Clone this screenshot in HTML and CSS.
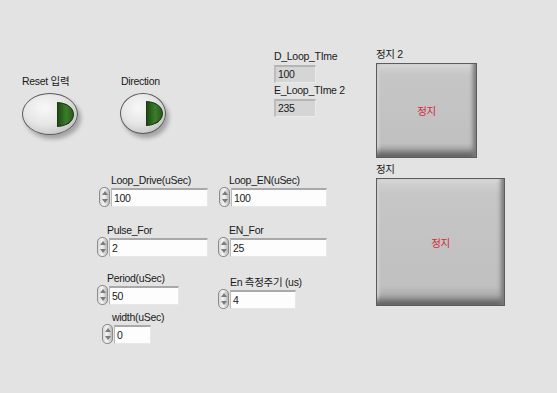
FILE: index.html
```html
<!DOCTYPE html>
<html lang="ko">
<head>
  <meta charset="UTF-8" />
  <title>Front Panel</title>
  <link rel="stylesheet" href="styles.css">
</head>
<body>
  <!-- front panel: every control sits where it was dropped on the panel -->
  <div class="panel">

    <div class="ctl" style="left:22px; top:75px;">
      <div class="lbl">Reset 입력</div>
      <div class="round big"><span class="led"></span></div>
    </div>

    <div class="ctl" style="left:121px; top:75px;">
      <div class="lbl">Direction</div>
      <div class="round small"><span class="led"></span></div>
    </div>

    <div class="ctl" style="left:274px; top:50px;">
      <div class="lbl">D_Loop_TIme</div>
      <div class="ind">100</div>
    </div>
    <div class="ctl" style="left:274px; top:84px;">
      <div class="lbl">E_Loop_TIme 2</div>
      <div class="ind">235</div>
    </div>

    <div class="ctl" style="left:376px; top:48px;">
      <div class="lbl">정지 2</div>
      <div class="stop stop-sm">정지</div>
    </div>
    <div class="ctl" style="left:376px; top:163px;">
      <div class="lbl">정지</div>
      <div class="stop stop-lg">정지</div>
    </div>

    <div class="ctl num" style="left:99px; top:174px;">
      <div class="lbl" style="padding-left:12px;">Loop_Drive(uSec)</div>
      <div class="row"><span class="spin"></span><div class="box" style="width:97px;">100</div></div>
    </div>
    <div class="ctl num" style="left:219px; top:174px;">
      <div class="lbl" style="padding-left:10px;">Loop_EN(uSec)</div>
      <div class="row"><span class="spin"></span><div class="box" style="width:96px;">100</div></div>
    </div>

    <div class="ctl num" style="left:97px; top:224px;">
      <div class="lbl" style="padding-left:10px;">Pulse_For</div>
      <div class="row"><span class="spin"></span><div class="box" style="width:99px;">2</div></div>
    </div>
    <div class="ctl num" style="left:218px; top:224px;">
      <div class="lbl" style="padding-left:11px;">EN_For</div>
      <div class="row"><span class="spin"></span><div class="box" style="width:97px;">25</div></div>
    </div>

    <div class="ctl num" style="left:97px; top:272px;">
      <div class="lbl" style="padding-left:10px;">Period(uSec)</div>
      <div class="row"><span class="spin"></span><div class="box" style="width:70px;">50</div></div>
    </div>
    <div class="ctl num" style="left:218px; top:276px;">
      <div class="lbl" style="padding-left:12px;">En 측정주기 (us)</div>
      <div class="row"><span class="spin"></span><div class="box" style="width:66px;">4</div></div>
    </div>

    <div class="ctl num" style="left:102px; top:311px;">
      <div class="lbl" style="padding-left:10px;">width(uSec)</div>
      <div class="row"><span class="spin"></span><div class="box" style="width:37px;">0</div></div>
    </div>

  </div>
</body>
</html>
```

FILE: styles.css
```css
* { margin: 0; padding: 0; box-sizing: border-box; }
body {
  background: #e3e3e3;
  font-family: 'Liberation Sans', 'Noto Sans CJK KR', sans-serif;
  font-size: 10.5px;
  letter-spacing: -0.3px;
  color: #1a1a1a;
}
.panel {
  position: relative;
  width: 557px;
  height: 393px;
  overflow: hidden;
}
.ctl {
  position: absolute;
  display: flex;
  flex-direction: column;
  align-items: flex-start;
}
.lbl {
  line-height: 13px;
  white-space: nowrap;
}

/* round push buttons with green light */
.round {
  margin-top: 5px;
  border-radius: 50%;
  border: 1px solid #5a5a5a;
  background: radial-gradient(ellipse at 40% 35%, #f8f8f8 0%, #e6e6e6 45%, #c0c0c0 85%, #969696 100%);
  box-shadow: 3px 4px 4px rgba(0,0,0,0.28);
  display: flex;
  align-items: center;
  justify-content: flex-end;
}
.round.big { width: 56px; height: 42px; padding-right: 3px; }
.round.small { width: 46px; height: 41px; padding-right: 2px; margin-left: -1px; }
.led {
  width: 17px;
  height: 25px;
  border: 1px solid #1d3a12;
  border-radius: 0 100% 100% 0 / 0 50% 50% 0;
  background: linear-gradient(90deg, #1e4c14, #3c7d2a 55%, #2a5c1c);
}

/* indicators */
.ind {
  margin-top: 2px;
  width: 42px;
  height: 18px;
  background: #d5d5d5;
  border-top: 2px solid #b4b4b4;
  border-left: 2px solid #bdbdbd;
  border-right: 1px solid #eaeaea;
  border-bottom: 1px solid #eaeaea;
  padding-left: 2px;
  line-height: 14px;
}

/* stop buttons */
.stop {
  border: 1px solid #5c5c5c;
  background: linear-gradient(#d4d4d4, #c6c6c6 12%, #c0c0c0 85%, #9a9a9a);
  box-shadow: inset -5px 0 4px -2px #7a7a7a, inset 0 -8px 6px -3px #606060, inset 3px 0 3px -1px #e2e2e2, inset 0 3px 3px -1px #e0e0e0;
  color: #d42a3a;
  display: flex;
  align-items: center;
  justify-content: center;
}
.stop-sm { margin-top: 2px; width: 101px; height: 95px; }
.stop-lg { margin-top: 2px; width: 129px; height: 128px; }

/* numeric controls */
.row {
  display: flex;
  align-items: center;
}
.spin {
  width: 11px;
  height: 20px;
  border-radius: 5px;
  border: 1px solid #8c8c8c;
  background: linear-gradient(90deg, #d8d8d8, #f4f4f4 45%, #b8b8b8);
  position: relative;
  margin-right: 1px;
}
.spin::before, .spin::after {
  content: '';
  position: absolute;
  left: 2px;
  border-left: 3px solid transparent;
  border-right: 3px solid transparent;
}
.spin::before { top: 3px; border-bottom: 4px solid #7a7a7a; }
.spin::after { bottom: 3px; border-top: 4px solid #7a7a7a; }
.box {
  height: 19px;
  background: #fdfdfd;
  border-top: 2px solid #a9a9a9;
  border-left: 1px solid #b9b9b9;
  border-right: 1px solid #e8e8e8;
  border-bottom: 1px solid #e8e8e8;
  padding-left: 2px;
  line-height: 16px;
}
```
